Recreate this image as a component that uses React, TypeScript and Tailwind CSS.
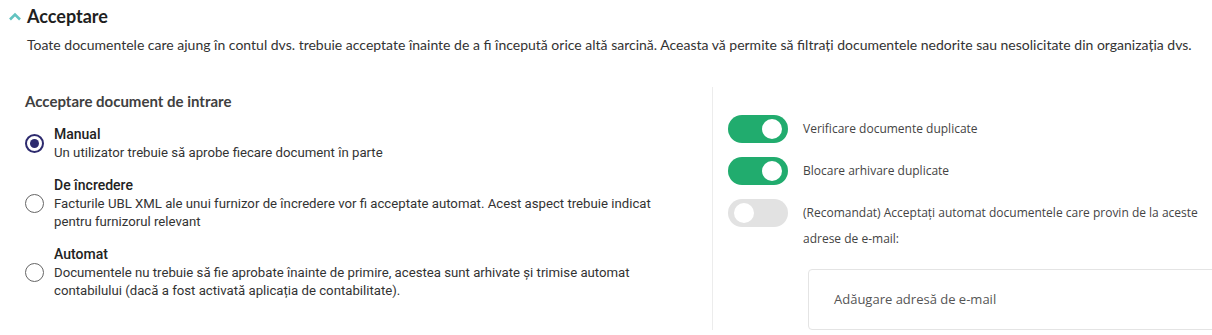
const options = [
  {
    id: "manual",
    title: "Manual",
    desc: "Un utilizator trebuie să aprobe fiecare document în parte",
  },
  {
    id: "trusted",
    title: "De încredere",
    desc: "Facturile UBL XML ale unui furnizor de încredere vor fi acceptate automat. Acest aspect trebuie indicat pentru furnizorul relevant",
  },
  {
    id: "auto",
    title: "Automat",
    desc: "Documentele nu trebuie să fie aprobate înainte de primire, acestea sunt arhivate și trimise automat contabilului (dacă a fost activată aplicația de contabilitate).",
  },
];

function Radio({ checked }: { checked: boolean }) {
  return checked ? (
    <span className="flex h-[19px] w-[19px] shrink-0 items-center justify-center rounded-full border-2 border-[#2d2a6e]">
      <span className="h-[9px] w-[9px] rounded-full bg-[#2d2a6e]" />
    </span>
  ) : (
    <span className="h-[19px] w-[19px] shrink-0 rounded-full border-[1.5px] border-[#666]" />
  );
}

function Toggle({ on }: { on: boolean }) {
  return (
    <span
      className={
        on
          ? "flex h-[28px] w-[60px] shrink-0 items-center justify-end rounded-full bg-[#21ac6e] px-[6px]"
          : "flex h-[28px] w-[60px] shrink-0 items-center justify-start rounded-full bg-[#e2e2e2] px-[6px]"
      }
    >
      <span className="h-[20px] w-[20px] rounded-full bg-white" />
    </span>
  );
}

export default function App() {
  return (
    <div className="h-[335px] w-[1212px] overflow-hidden bg-white">
      <div className="flex items-center pl-[8px] pt-[4px]">
        <svg width="14" height="10" viewBox="0 0 14 10" className="mr-[5px] mt-[1px]">
          <path d="M2 7.5 L7 2.5 L12 7.5" fill="none" stroke="#62c3c0" strokeWidth="2.6" />
        </svg>
        <h2 className="font-['Lato',sans-serif] text-[18px] font-bold leading-[24px] text-[#1f1f1f]">
          Acceptare
        </h2>
      </div>
      <p className="mt-[7px] pl-[27px] font-['Lato',sans-serif] text-[14px] leading-[20px] text-[#333]">
        Toate documentele care ajung în contul dvs. trebuie acceptate înainte de a fi începută orice altă sarcină.
        Aceasta vă permite să filtrați documentele nedorite sau nesolicitate din organizația dvs.
      </p>

      <div className="mt-[32px] flex">
        <div className="w-[712px] shrink-0 pl-[25px] pt-[4px]">
          <h3 className="font-['Lato',sans-serif] text-[15px] font-bold leading-[20px] text-[#404040]">
            Acceptare document de intrare
          </h3>
          <div className="mt-[14px] flex flex-col gap-[14px] font-['Roboto',sans-serif]">
            {options.map((o) => (
              <div key={o.id} className="flex items-center gap-[10px]">
                <Radio checked={o.id === "manual"} />
                <div className="max-w-[625px]">
                  <div className="text-[14px] font-medium leading-[19px] text-[#222]">{o.title}</div>
                  <div className="text-[13.2px] leading-[18px] text-[#333]">{o.desc}</div>
                </div>
              </div>
            ))}
          </div>
        </div>

        <div className="flex-1 border-l border-[#ececec] pl-[15px] pt-[28px] font-['Open_Sans',sans-serif] text-[12px] text-[#444]">
          <div className="flex items-center gap-[15px]">
            <Toggle on />
            <span>Verificare documente duplicate</span>
          </div>
          <div className="mt-[14px] flex items-center gap-[15px]">
            <Toggle on />
            <span>Blocare arhivare duplicate</span>
          </div>
          <div className="mt-[14px] flex items-start gap-[15px]">
            <Toggle on={false} />
            <span className="max-w-[395px] leading-[26px] pt-[1px]">
              (Recomandat) Acceptați automat documentele care provin de la aceste adrese de e-mail:
            </span>
          </div>
          <div className="ml-[80px] mt-[17px] flex h-[61px] w-[420px] items-center rounded-[4px] border border-[#e4e4e4] pl-[25px] text-[13px] text-[#555]">
            Adăugare adresă de e-mail
          </div>
        </div>
      </div>
    </div>
  );
}
